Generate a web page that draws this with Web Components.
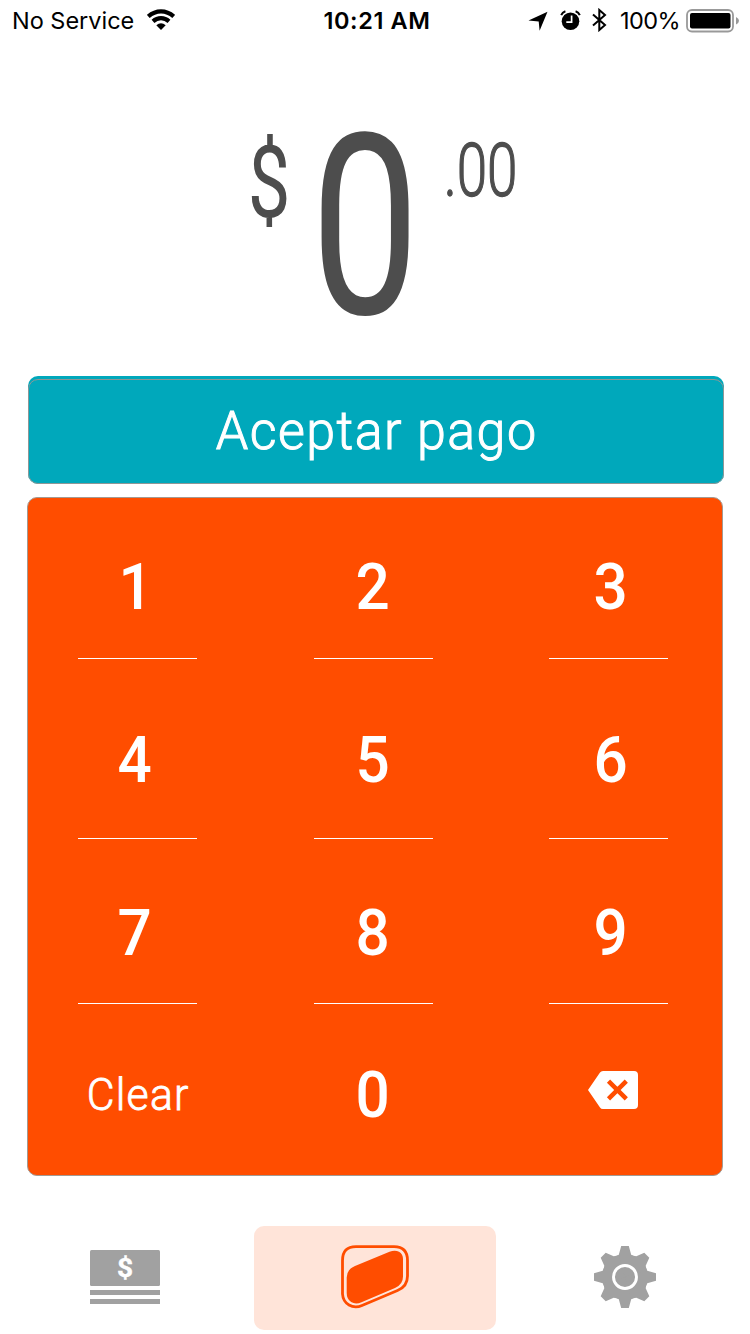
<!DOCTYPE html>
<html lang="es">
<head>
<meta charset="utf-8">
<title>Cobro</title>
<style>
html,body{margin:0;background:#fff}
body{width:750px;height:1334px;overflow:hidden;font-family:Roboto,"Open Sans",sans-serif}
</style>
</head>
<body>
<pay-app></pay-app>
<script>
const define = (name, html) => customElements.define(name, class extends HTMLElement {
  constructor() {
    super();
    const t = document.createElement('template');
    t.innerHTML = html;
    this.attachShadow({mode: 'open'}).append(t.content.cloneNode(true));
  }
});

/* Text condensed horizontally around its centre: --sx is the factor. */
define('narrow-text', `
<style>
:host{display:flex;justify-content:center;white-space:nowrap}
span{display:block;flex:none;transform:scaleX(var(--sx,1));-webkit-text-stroke:var(--stroke,0) currentColor}
</style><span><slot></slot></span>`);

define('status-bar', `
<style>
:host{display:grid;grid-template-columns:1fr auto 1fr;height:40px;padding:0 10px 0 12px;color:#000;
 font:400 23.5px/41px Inter,sans-serif;box-sizing:border-box}
div{display:flex;align-items:center}
svg{display:block;flex:none}
.l{letter-spacing:-.02px}.l svg{margin-left:13px;margin-top:-1px}
.c{font-weight:600;letter-spacing:.6px;padding-left:2px}
.r{justify-content:flex-end}
.p{letter-spacing:-.6px;margin:0 6px 0 13px}
</style>
<div class="l"><span>No Service</span>
<svg width="28" height="22" viewBox="0 0 28 22"><g fill="none" stroke="#000" stroke-width="4.2"><path d="M1.3 7.4Q7 2.3 14 2.3T26.7 7.4"/><path d="M6 12.4Q9.5 9.2 14 9.2T22 12.4"/></g><path d="M9.3 16.3Q14 12.4 18.7 16.3L14 21z"/></svg></div>
<div class="c">10:21 AM</div>
<div class="r">
<svg width="20" height="20" viewBox="0 0 20 20"><path d="M19.5.8L11.6 19.8 10.7 10.4.5 9.4z"/></svg>
<svg style="margin-left:12px;margin-top:-1px" width="21" height="21" viewBox="0 0 21 21"><circle cx="10.5" cy="11.2" r="8.8"/><path d="M1.2 5.2Q2.4 2.2 5.4 1.2M19.8 5.2Q18.6 2.2 15.600 1.2" stroke="#000" stroke-width="2" fill="none"/><path d="M11.6 5.5v6.600H6.300" fill="none" stroke="#fff" stroke-width="1.7"/></svg>
<svg style="margin-left:11px;margin-top:-1px" width="15" height="24" viewBox="0 0 15 24"><path d="M1 6.500L13 17 7.300 22V2L13 7 1 17.500" fill="none" stroke="#000" stroke-width="2"/></svg>
<span class="p">100%</span>
<svg width="54" height="24" viewBox="0 0 54 24"><rect x="1" y="1" width="46" height="21.500" rx="5" fill="none" stroke="#999" stroke-width="1.8"/><rect x="4" y="4" width="40.500" height="15.500" rx="2"/><path d="M50 8q3 1.500 3 3.800t-3 3.700z" fill="#999"/></svg>
</div>`);

define('amount-display', `
<style>
:host{display:flex;height:336px;padding-left:250px;box-sizing:border-box;color:#4d4d4d}
narrow-text{height:0}
.s{width:38px;margin-top:83px;font-size:100px;line-height:120px;--sx:.76}
.n{width:90px;margin-left:32px;font-size:253px;line-height:280px;--sx:.765;margin-top:48px}
.d{width:71px;margin-left:35px;font-size:73.500px;font-weight:300;line-height:80px;--sx:.745;--stroke:1.300px;margin-top:91px}
</style>
<narrow-text class="s">$</narrow-text>
<narrow-text class="n">0</narrow-text>
<narrow-text class="d">.00</narrow-text>`);

define('pay-button', `
<style>
:host{display:block;width:696px;height:108px;margin-left:28px;padding-top:3px;box-sizing:border-box;background:#00a8bb;border-radius:10px}
div{height:105px;box-sizing:border-box;border:1px solid #8f9796;border-radius:10px;color:#fff;
 font-weight:300;font-size:54.500px;line-height:101px;letter-spacing:1.5px}
narrow-text{--sx:.954;--stroke:1px;padding-left:1px}
</style><div><narrow-text><slot></slot></narrow-text></div>`);

define('pad-key', `
<style>
:host{display:block;width:119px;box-sizing:border-box;padding-top:var(--top);border-bottom:1px solid #fff;
 font-size:65.500px;font-weight:500;line-height:66px;color:#fff}
:host([plain]){border-bottom:0}
narrow-text{--sx:.92;position:relative;left:var(--dx,0)}
:host([word]){font-size:45px;font-weight:300;letter-spacing:1.300px}
:host([word]) narrow-text{--sx:.95;--stroke:.8px;left:.5px}
</style><narrow-text><slot></slot></narrow-text>`);

define('key-pad', `
<style>
:host{display:grid;grid-template-columns:119px 119px 119px;column-gap:116.500px;grid-template-rows:161px 180px 165px 171px;
 width:696px;height:679px;box-sizing:border-box;margin:13px 0 0 27px;padding-left:50px;
 background:#ff4d00;border:1px solid #a39a93;border-radius:10px}
.a{--dx:-3px}.c{--dx:2.500px}.one{--dx:-1.500px}
.r1{--top:56px}.r2{--top:68px}.r3{--top:61px}.r4{--top:58px}
svg{display:block;margin:67px 0 0 39px}
</style>
<pad-key class="one r1">1</pad-key><pad-key class="r1">2</pad-key><pad-key class="c r1">3</pad-key>
<pad-key class="a r2">4</pad-key><pad-key class="r2">5</pad-key><pad-key class="c r2">6</pad-key>
<pad-key class="a r3">7</pad-key><pad-key class="r3">8</pad-key><pad-key class="c r3">9</pad-key>
<pad-key plain word style="--top:58px">Clear</pad-key><pad-key plain class="r4">0</pad-key>
<svg width="50" height="38" viewBox="0 0 50 38"><path d="M15 0H46Q50 0 50 4V34Q50 38 46 38H15Q13 38 12 36.500L0 19 12 1.500Q13 0 15 0z" fill="#fff"/><path d="M20.500 10.100L38.300 27.900M38.300 10.100L20.500 27.900" stroke="#ff4d00" stroke-width="4.500"/></svg>`);

define('tab-bar', `
<style>
:host{display:grid;grid-template-columns:242px 242px 242px;padding-left:4px;column-gap:8px;margin-top:50px;height:104px}
div{display:flex;justify-content:center;align-items:flex-start;border-radius:10px}
.on{background:#ffe4d9}
</style>
<div><svg style="margin-top:24px" width="70" height="54" viewBox="0 0 70 54"><g fill="#a1a1a1"><rect width="70" height="36" rx="1.500"/><rect y="40" width="70" height="5"/><rect y="49" width="70" height="5"/></g><text transform="translate(35 27) scale(1.08 1)" text-anchor="middle" font-family="Roboto" font-weight="700" font-size="26" fill="#fff" stroke="#fff" stroke-width=".4">$</text></svg></div>
<div class="on"><svg style="margin-top:19px" width="68" height="64" viewBox="0 0 68 64"><path d="M1.500 15.500Q1.500 1.600 15 1.600H53Q66.500 1.600 66.500 15.500V31Q66.500 41.500 56.500 45.500L21 60.500Q14 63.500 8 60T1.500 49z" fill="none" stroke="#ff4d00" stroke-width="2.800"/><path d="M5.700 32.500Q5.700 24.500 14 21L48.500 6.800Q54 4.500 58 6.800T62 14V31.500Q62 39.500 54 43L20.500 57.300Q14.500 59.800 10.100 57T5.700 48z" fill="#ff4d00"/></svg></div>
<div><svg style="margin-top:20px" width="62" height="62" viewBox="-31 -31 62 62"><g fill="#a1a1a1"><circle r="22.800"/>
<path id="t" d="M0 0L-6.200-22.300-3.800-31H3.800L6.200-22.300Q8.500-21 11.300-20.700L19.300-24.300 24.300-19.300 20.700-11.300Q21-8.500 22.300-6.200z"/>
<use href="#t" transform="rotate(90)"/><use href="#t" transform="rotate(180)"/><use href="#t" transform="rotate(270)"/></g><circle r="11.500" fill="none" stroke="#fff" stroke-width="2.900"/></svg></div>`);

define('pay-app', `
<style>:host{display:flex;flex-direction:column;width:750px;height:1334px;background:#fff}</style>
<status-bar></status-bar>
<amount-display></amount-display>
<pay-button>Aceptar pago</pay-button>
<key-pad></key-pad>
<tab-bar></tab-bar>`);
</script>
</body>
</html>
